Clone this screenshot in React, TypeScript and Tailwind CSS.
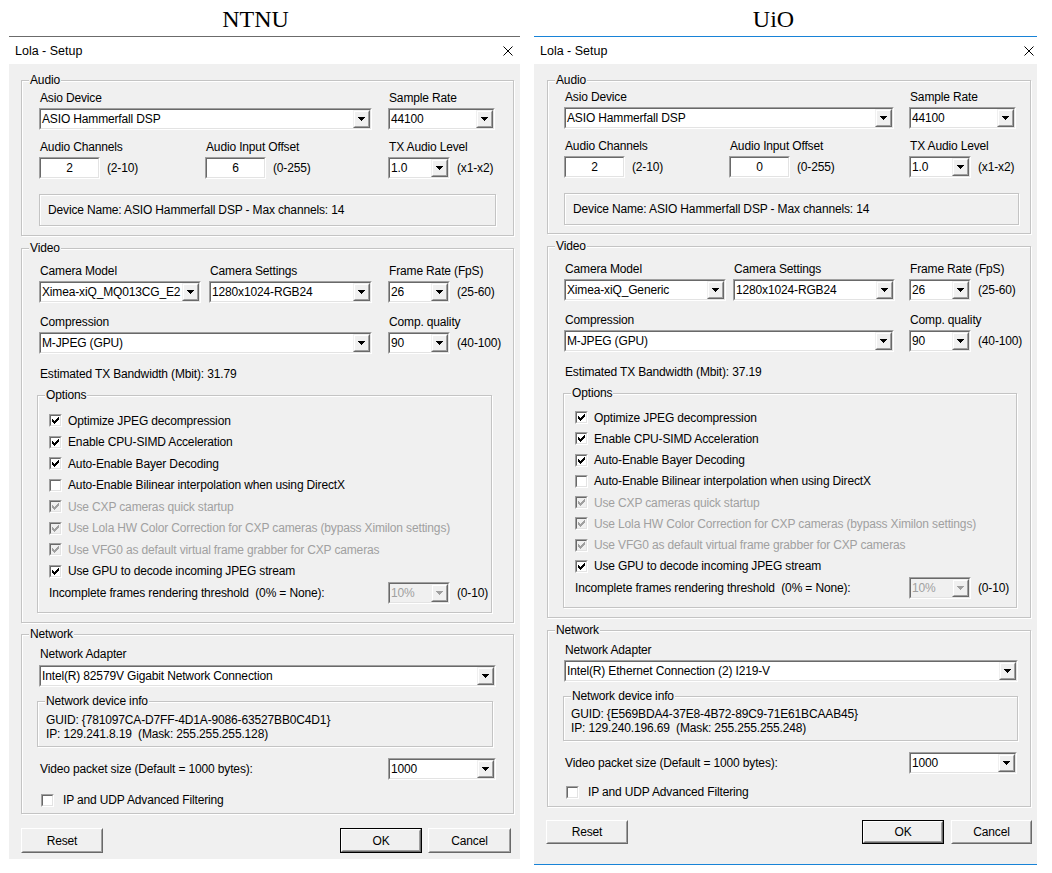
import React from "react";

const FONT = "font-['Liberation_Sans',Arial,sans-serif]";

type Cfg = Record<string, string>;

function Arrow({ disabled }: { disabled?: boolean }) {
  return (
    <svg width="7" height="4" viewBox="0 0 7 4" className={disabled ? "fill-[#a0a0a0]" : "fill-black"}>
      <path d="M0 0h7v1H0zM1 1h5v1H1zM2 2h3v1H2zM3 3h1v1H3z" />
    </svg>
  );
}

function Sunken({ className = "", inner = "", children }: { className?: string; inner?: string; children?: React.ReactNode }) {
  return (
    <div className={`flex shrink-0 border border-t-[#a0a0a0] border-l-[#a0a0a0] border-r-white border-b-white ${className}`}>
      <div className={`flex flex-1 min-w-0 border border-t-[#696969] border-l-[#696969] border-r-[#e3e3e3] border-b-[#e3e3e3] ${inner}`}>
        {children}
      </div>
    </div>
  );
}

function Combo({ w, value, disabled, className = "" }: { w: string; value: string; disabled?: boolean; className?: string }) {
  return (
    <Sunken className={`${w} h-[22px] ${className}`} inner={disabled ? "bg-[#f0f0f0]" : "bg-white"}>
      <div className={`flex-1 min-w-0 pl-[1px] flex items-center whitespace-nowrap overflow-hidden ${disabled ? "text-[#a0a0a0]" : ""}`}>{value}</div>
      <div className="w-[17px] shrink-0 flex bg-[#f0f0f0] border border-t-[#f0f0f0] border-l-[#f0f0f0] border-r-[#696969] border-b-[#696969]">
        <div className="flex flex-1 items-center justify-center border border-t-white border-l-white border-r-[#a0a0a0] border-b-[#a0a0a0]">
          <Arrow disabled={disabled} />
        </div>
      </div>
    </Sunken>
  );
}

function Edit({ w, value, className = "" }: { w: string; value: string; className?: string }) {
  return (
    <Sunken className={`${w} h-[22px] ${className}`} inner="bg-white items-center justify-center">
      {value}
    </Sunken>
  );
}

function Check({ checked, disabled }: { checked?: boolean; disabled?: boolean }) {
  return (
    <Sunken className="w-[13px] h-[13px]" inner={disabled ? "bg-[#f0f0f0]" : "bg-white"}>
      {checked && (
        <svg width="7" height="7" viewBox="0 0 7 7" className={`m-[1px] ${disabled ? "fill-[#a0a0a0]" : "fill-black"}`}>
          <path d="M6 0h1v1H6zM5 1h2v1H5zM0 2h1v1H0zM4 2h3v1H4zM0 3h2v1H0zM3 3h3v1H3zM0 4h5v1H0zM1 5h3v1H1zM2 6h1v1H2z" />
        </svg>
      )}
    </Sunken>
  );
}

function Btn({ w, h, label, def, className = "" }: { w: string; h: string; label: string; def?: boolean; className?: string }) {
  return (
    <div className={`${w} ${h} flex shrink-0 ${def ? "border border-black" : ""} ${className}`}>
      <div className="flex flex-1 bg-[#f0f0f0] border border-t-white border-l-white border-r-[#696969] border-b-[#696969]">
        <div className="flex flex-1 items-center justify-center border border-t-[#f0f0f0] border-l-[#f0f0f0] border-r-[#a0a0a0] border-b-[#a0a0a0]">
          {label}
        </div>
      </div>
    </div>
  );
}

function Group({ label, className = "", children }: { label: string; className?: string; children?: React.ReactNode }) {
  return (
    <div className={`relative border border-[#c4c4c4] shadow-[inset_1px_1px_0_#fff,1px_1px_0_#fff] ${className}`}>
      <span className="absolute left-[7px] top-[-8px] px-[1px] bg-[#f0f0f0] leading-[14px] whitespace-nowrap">{label}</span>
      {children}
    </div>
  );
}

function Label({ children }: { children: React.ReactNode }) {
  return <div className="pl-[1px] h-[14px] leading-[14px] whitespace-nowrap">{children}</div>;
}

const OPTS = [
  { t: "Optimize JPEG decompression", c: true, d: false },
  { t: "Enable CPU-SIMD Acceleration", c: true, d: false },
  { t: "Auto-Enable Bayer Decoding", c: true, d: false },
  { t: "Auto-Enable Bilinear interpolation when using DirectX", c: false, d: false },
  { t: "Use CXP cameras quick startup", c: true, d: true },
  { t: "Use Lola HW Color Correction for CXP cameras (bypass Ximilon settings)", c: true, d: true },
  { t: "Use VFG0 as default virtual frame grabber for CXP cameras", c: true, d: true },
  { t: "Use GPU to decode incoming JPEG stream", c: true, d: false },
];

function Dialog({ c }: { c: Cfg }) {
  return (
    <div className={`${c.wrap} flex flex-col shrink-0`}>
      <div className={`h-[36px] pt-[5px] text-center font-['Liberation_Serif','Times_New_Roman',serif] text-[24px] leading-[28px] tracking-normal ${c.headPad}`}>
        {c.heading}
      </div>
      <div className={c.frame}>
        <div className={`h-[27px] bg-white flex items-center pl-[6px] ${c.closePad}`}>
          <span className="flex-1 text-[12.5px] tracking-normal">Lola - Setup</span>
          <svg width="10" height="10" viewBox="0 0 10 10" className="stroke-black" strokeWidth="1" fill="none">
            <path d="M0.5 0.5L9.5 9.5M9.5 0.5L0.5 9.5" />
          </svg>
        </div>
        <div className={`bg-[#f0f0f0] ${c.body}`}>
          {/* Audio */}
          <Group label="Audio">
            <div className={`${c.gp} ${c.aPt} ${c.aPb}`}>
              <div className="flex">
                <div className="flex flex-col">
                  <Label>Asio Device</Label>
                  <Combo w={c.bigCombo} className="mt-[3px]" value="ASIO Hammerfall DSP" />
                </div>
                <div className={`flex flex-col ${c.col3Gap}`}>
                  <Label>Sample Rate</Label>
                  <Combo w={c.col3Combo} className="mt-[3px]" value="44100" />
                </div>
              </div>
              <div className={`flex ${c.row2Mt}`}>
                <div className={`${c.col1} flex flex-col shrink-0`}>
                  <Label>Audio Channels</Label>
                  <div className="flex items-center mt-[3px]">
                    <Edit w="w-[61px]" value="2" />
                    <span className="ml-[7px]">(2-10)</span>
                  </div>
                </div>
                <div className={`${c.col2} flex flex-col shrink-0`}>
                  <Label>Audio Input Offset</Label>
                  <div className="flex items-center mt-[3px]">
                    <Edit w="w-[61px]" value={c.offset} />
                    <span className="ml-[7px]">(0-255)</span>
                  </div>
                </div>
                <div className="flex flex-col">
                  <Label>TX Audio Level</Label>
                  <div className="flex items-center mt-[3px]">
                    <Combo w="w-[62px]" value="1.0" />
                    <span className="ml-[7px] whitespace-nowrap">(x1-x2)</span>
                  </div>
                </div>
              </div>
              <div className={`${c.devBox} h-[32px] ${c.devMt} border border-[#c4c4c4] shadow-[inset_1px_1px_0_#fff,1px_1px_0_#fff] flex items-center pl-[8px] whitespace-nowrap`}>
                Device Name: ASIO Hammerfall DSP - Max channels: 14
              </div>
            </div>
          </Group>

          {/* Video */}
          <Group label="Video" className={c.vMt}>
            <div className={`${c.gp} ${c.vPt} ${c.vPb}`}>
              <div className="flex">
                <div className={`${c.camCol} flex flex-col shrink-0`}>
                  <Label>Camera Model</Label>
                  <Combo w={c.camCombo} className="mt-[3px]" value={c.camera} />
                </div>
                <div className={`${c.setCol} flex flex-col shrink-0`}>
                  <Label>Camera Settings</Label>
                  <Combo w={c.setCombo} className="mt-[3px]" value="1280x1024-RGB24" />
                </div>
                <div className="flex flex-col">
                  <Label>Frame Rate (FpS)</Label>
                  <div className="flex items-center mt-[3px]">
                    <Combo w="w-[62px]" value="26" />
                    <span className="ml-[7px] whitespace-nowrap">(25-60)</span>
                  </div>
                </div>
              </div>
              <div className={`flex ${c.compMt}`}>
                <div className="flex flex-col">
                  <Label>Compression</Label>
                  <Combo w={c.bigCombo} className="mt-[3px]" value="M-JPEG (GPU)" />
                </div>
                <div className={`flex flex-col ${c.col3Gap}`}>
                  <Label>Comp. quality</Label>
                  <div className="flex items-center mt-[3px]">
                    <Combo w="w-[62px]" value="90" />
                    <span className="ml-[7px] whitespace-nowrap">(40-100)</span>
                  </div>
                </div>
              </div>
              <div className={c.estMt}>
                <Label>Estimated TX Bandwidth (Mbit): {c.bw}</Label>
              </div>
              <Group label="Options" className={`${c.optW} ${c.optMl} ${c.optMt}`}>
                <div className={`pl-[11px] ${c.optPt} pb-[8px]`}>
                  {OPTS.map((o) => (
                    <div key={o.t} className={`${c.optRow} flex items-center`}>
                      <Check checked={o.c} disabled={o.d} />
                      <span className={`ml-[6px] whitespace-nowrap ${o.d ? "text-[#a0a0a0]" : ""}`}>{o.t}</span>
                    </div>
                  ))}
                  <div className="flex items-center h-[22px]">
                    <span className={`${c.incW} shrink-0 whitespace-pre`}>Incomplete frames rendering threshold  (0% = None):</span>
                    <Combo w="w-[62px]" value="10%" disabled />
                    <span className="ml-[7px] whitespace-nowrap">(0-10)</span>
                  </div>
                </div>
              </Group>
            </div>
          </Group>

          {/* Network */}
          <Group label="Network" className={c.netMt}>
            <div className={`${c.gp} ${c.nPt} ${c.nPb}`}>
              <Label>Network Adapter</Label>
              <Combo w={c.netCombo} className={c.nComboMt} value={c.adapter} />
              <Group label="Network device info" className={`${c.infoW} ${c.infoMl} ${c.infoMt}`}>
                <div className={`${c.infoPad} leading-[14px] whitespace-pre`}>
                  <div>GUID: {c.guid}</div>
                  <div>IP: {c.ip}</div>
                </div>
              </Group>
              <div className={`flex items-center ${c.pktMt}`}>
                <span className={`${c.pktLbl} shrink-0 pl-[1px] whitespace-nowrap`}>Video packet size (Default = 1000 bytes):</span>
                <Combo w={c.pktCombo} value="1000" />
              </div>
              <div className={`flex items-center h-[14px] ml-[2px] ${c.ipMt}`}>
                <Check />
                <span className="ml-[9px] whitespace-nowrap">IP and UDP Advanced Filtering</span>
              </div>
            </div>
          </Group>

          {/* Buttons */}
          <div className={`flex ${c.btnMt} ${c.btnRow}`}>
            <Btn w="w-[82px]" h={c.btnH} label="Reset" />
            <div className="flex-1" />
            <Btn w={c.okW} h={c.btnH} label="OK" def />
            <Btn w={c.cancelW} h={c.btnH} label="Cancel" className={c.cancelGap} />
          </div>
        </div>
      </div>
    </div>
  );
}

const L: Cfg = {
  heading: "NTNU",
  headPad: "pr-[18px]",
  wrap: "ml-[9px] w-[511px]",
  frame: "border-t border-[#6b6b6b]",
  closePad: "pr-[7px]",
  body: "pl-[12px] pr-[6px] pt-[16px] pb-[6px]",
  gp: "pl-[17px]",
  aPt: "pt-[10px]",
  aPb: "pb-[9px]",
  row2Mt: "mt-[10px]",
  devMt: "mt-[15px]",
  bigCombo: "w-[333px]",
  col3Gap: "ml-[16px]",
  col3Combo: "w-[107px]",
  col1: "w-[166px]",
  col2: "w-[183px]",
  devBox: "w-[457px]",
  vMt: "mt-[12px]",
  vPt: "pt-[15px]",
  vPb: "pb-[9px]",
  camCol: "w-[170px]",
  camCombo: "w-[162px]",
  setCol: "w-[179px]",
  setCombo: "w-[163px]",
  compMt: "mt-[12px]",
  estMt: "mt-[13px]",
  optMt: "mt-[14px]",
  optW: "w-[455px]",
  optMl: "-ml-[2px]",
  optPt: "pt-[14px]",
  optRow: "h-[21.5px]",
  incW: "w-[339px]",
  netMt: "mt-[11px]",
  nPt: "pt-[12px]",
  nPb: "pb-[6px]",
  nComboMt: "mt-[4px]",
  netCombo: "w-[457px]",
  infoMt: "mt-[14px]",
  infoW: "w-[456px]",
  infoMl: "-ml-[2px]",
  infoPad: "pl-[8px] pt-[11px] pb-[5px]",
  pktMt: "mt-[11px]",
  pktLbl: "w-[349px]",
  pktCombo: "w-[108px]",
  ipMt: "mt-[13px]",
  btnMt: "mt-[14px]",
  btnRow: "mr-[3px]",
  btnH: "h-[25px]",
  okW: "w-[82px]",
  cancelW: "w-[83px]",
  cancelGap: "ml-[6px]",
  offset: "6",
  camera: "Ximea-xiQ_MQ013CG_E2",
  bw: "31.79",
  adapter: "Intel(R) 82579V Gigabit Network Connection",
  guid: "{781097CA-D7FF-4D1A-9086-63527BB0C4D1}",
  ip: "129.241.8.19  (Mask: 255.255.255.128)",
};

const R: Cfg = {
  heading: "UiO",
  headPad: "pr-[24px]",
  wrap: "ml-[14px] w-[503px]",
  frame: "border-t border-b border-[#1883d7]",
  closePad: "pr-[3px]",
  body: "pl-[13px] pr-[6px] pt-[16px] pb-[20px]",
  gp: "pl-[16px]",
  aPt: "pt-[9px]",
  aPb: "pb-[8px]",
  row2Mt: "mt-[10px]",
  devMt: "mt-[15px]",
  bigCombo: "w-[330px]",
  col3Gap: "ml-[15px]",
  col3Combo: "w-[107px]",
  col1: "w-[165px]",
  col2: "w-[180px]",
  devBox: "w-[455px]",
  vMt: "mt-[12px]",
  vPt: "pt-[15px]",
  vPb: "pb-[9px]",
  camCol: "w-[169px]",
  camCombo: "w-[162px]",
  setCol: "w-[176px]",
  setCombo: "w-[162px]",
  compMt: "mt-[12px]",
  estMt: "mt-[13px]",
  optMt: "mt-[14px]",
  optW: "w-[454px]",
  optMl: "-ml-[1px]",
  optPt: "pt-[13px]",
  optRow: "h-[21.25px]",
  incW: "w-[334px]",
  netMt: "mt-[12px]",
  nPt: "pt-[12px]",
  nPb: "pb-[7px]",
  nComboMt: "mt-[3px]",
  netCombo: "w-[454px]",
  infoMt: "mt-[14px]",
  infoW: "w-[455px]",
  infoMl: "-ml-[1px]",
  infoPad: "pl-[7px] pt-[10px] pb-[5px]",
  pktMt: "mt-[11px]",
  pktLbl: "w-[345px]",
  pktCombo: "w-[108px]",
  ipMt: "mt-[11px]",
  btnMt: "mt-[13px]",
  btnRow: "-mr-[1px] -ml-[1px]",
  btnH: "h-[24px]",
  okW: "w-[82px]",
  cancelW: "w-[81px]",
  cancelGap: "ml-[7px]",
  offset: "0",
  camera: "Ximea-xiQ_Generic",
  bw: "37.19",
  adapter: "Intel(R) Ethernet Connection (2) I219-V",
  guid: "{E569BDA4-37E8-4B72-89C9-71E61BCAAB45}",
  ip: "129.240.196.69  (Mask: 255.255.255.248)",
};

export default function App() {
  return (
    <div className={`${FONT} w-[1052px] h-[873px] bg-white text-black text-[12px] leading-[14px] tracking-[-0.15px] flex items-start overflow-hidden`}>
      <Dialog c={L} />
      <Dialog c={R} />
    </div>
  );
}
